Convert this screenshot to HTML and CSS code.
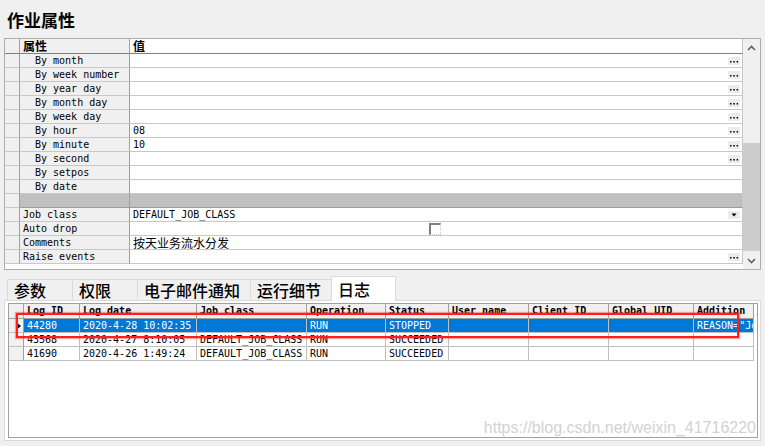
FILE: index.html
```html
<!DOCTYPE html>
<html lang="zh">
<head>
    <meta charset="UTF-8">
    <title>作业属性</title>
    <link rel="stylesheet" href="styles.css">
</head>
<body>
    <h1 class="title">作业属性</h1>

    <!-- grille des propriétés -->
    <div class="props">
        <div class="prop-grid">
            <div class="prop-row prop-head"><div class="ind"></div><div class="name">属性</div><div class="val">值</div></div>
            <div class="prop-row"><div class="ind"></div><div class="name sub">By month</div><div class="val"><span></span><svg class="btn" width="12" height="8"><rect width="12" height="8" fill="#ececec"/><rect x="2" y="4" width="1.5" height="1.5"/><rect x="5.3" y="4" width="1.5" height="1.5"/><rect x="8.6" y="4" width="1.5" height="1.5"/></svg></div></div>
            <div class="prop-row"><div class="ind"></div><div class="name sub">By week number</div><div class="val"><span></span><svg class="btn" width="12" height="8"><rect width="12" height="8" fill="#ececec"/><rect x="2" y="4" width="1.5" height="1.5"/><rect x="5.3" y="4" width="1.5" height="1.5"/><rect x="8.6" y="4" width="1.5" height="1.5"/></svg></div></div>
            <div class="prop-row"><div class="ind"></div><div class="name sub">By year day</div><div class="val"><span></span><svg class="btn" width="12" height="8"><rect width="12" height="8" fill="#ececec"/><rect x="2" y="4" width="1.5" height="1.5"/><rect x="5.3" y="4" width="1.5" height="1.5"/><rect x="8.6" y="4" width="1.5" height="1.5"/></svg></div></div>
            <div class="prop-row"><div class="ind"></div><div class="name sub">By month day</div><div class="val"><span></span><svg class="btn" width="12" height="8"><rect width="12" height="8" fill="#ececec"/><rect x="2" y="4" width="1.5" height="1.5"/><rect x="5.3" y="4" width="1.5" height="1.5"/><rect x="8.6" y="4" width="1.5" height="1.5"/></svg></div></div>
            <div class="prop-row"><div class="ind"></div><div class="name sub">By week day</div><div class="val"><span></span><svg class="btn" width="12" height="8"><rect width="12" height="8" fill="#ececec"/><rect x="2" y="4" width="1.5" height="1.5"/><rect x="5.3" y="4" width="1.5" height="1.5"/><rect x="8.6" y="4" width="1.5" height="1.5"/></svg></div></div>
            <div class="prop-row"><div class="ind"></div><div class="name sub">By hour</div><div class="val"><span>08</span><svg class="btn" width="12" height="8"><rect width="12" height="8" fill="#ececec"/><rect x="2" y="4" width="1.5" height="1.5"/><rect x="5.3" y="4" width="1.5" height="1.5"/><rect x="8.6" y="4" width="1.5" height="1.5"/></svg></div></div>
            <div class="prop-row"><div class="ind"></div><div class="name sub">By minute</div><div class="val"><span>10</span><svg class="btn" width="12" height="8"><rect width="12" height="8" fill="#ececec"/><rect x="2" y="4" width="1.5" height="1.5"/><rect x="5.3" y="4" width="1.5" height="1.5"/><rect x="8.6" y="4" width="1.5" height="1.5"/></svg></div></div>
            <div class="prop-row"><div class="ind"></div><div class="name sub">By second</div><div class="val"><span></span><svg class="btn" width="12" height="8"><rect width="12" height="8" fill="#ececec"/><rect x="2" y="4" width="1.5" height="1.5"/><rect x="5.3" y="4" width="1.5" height="1.5"/><rect x="8.6" y="4" width="1.5" height="1.5"/></svg></div></div>
            <div class="prop-row"><div class="ind"></div><div class="name sub">By setpos</div><div class="val"></div></div>
            <div class="prop-row"><div class="ind"></div><div class="name sub">By date</div><div class="val"></div></div>
            <div class="prop-row sep"><div class="ind"></div><div class="name"></div><div class="val"></div></div>
            <div class="prop-row"><div class="ind"></div><div class="name">Job class</div><div class="val"><span>DEFAULT_JOB_CLASS</span><svg class="btn" width="12" height="8"><rect width="12" height="8" fill="#ececec"/><path d="M3.5 2.5h5l-2.5 3z"/></svg></div></div>
            <div class="prop-row"><div class="ind"></div><div class="name">Auto drop</div><div class="val"><span class="check"></span></div></div>
            <div class="prop-row"><div class="ind"></div><div class="name">Comments</div><div class="val"><span class="cjk">按天业务流水分发</span></div></div>
            <div class="prop-row"><div class="ind"></div><div class="name">Raise events</div><div class="val"><span></span><svg class="btn" width="12" height="8"><rect width="12" height="8" fill="#ececec"/><rect x="2" y="4" width="1.5" height="1.5"/><rect x="5.3" y="4" width="1.5" height="1.5"/><rect x="8.6" y="4" width="1.5" height="1.5"/></svg></div></div>
        </div>
        <div class="vscroll">
            <div class="sb-btn"><svg width="9" height="6"><polyline points="1,5 4.5,1.5 8,5" fill="none" stroke="#606060" stroke-width="1.6"/></svg></div>
            <div class="sb-track"><div class="sb-thumb"></div></div>
            <div class="sb-btn"><svg width="9" height="6"><polyline points="1,1 4.5,4.5 8,1" fill="none" stroke="#606060" stroke-width="1.6"/></svg></div>
        </div>
    </div>

    <!-- onglets -->
    <div class="tabbar">
        <div class="tab">参数</div>
        <div class="tab">权限</div>
        <div class="tab">电子邮件通知</div>
        <div class="tab">运行细节</div>
        <div class="tab active">日志</div>
    </div>

    <div class="panel">
        <div class="loggrid">
            <div class="log-row log-head">
                <div class="ind"></div><div>Log ID</div><div>Log date</div><div>Job class</div><div>Operation</div><div>Status</div><div>User name</div><div>Client ID</div><div>Global UID</div><div>Addition</div>
            </div>
            <div class="log-row selected">
                <div class="ind"><svg class="arrow" width="5" height="8"><path d="M0 0v8l5-4z"/></svg></div><div>44280</div><div>2020-4-28 10:02:35</div><div></div><div>RUN</div><div>STOPPED</div><div></div><div></div><div></div><div>REASON="Job slave process</div>
            </div>
            <div class="log-row">
                <div class="ind"></div><div>43568</div><div>2020-4-27 8:10:05</div><div>DEFAULT_JOB_CLASS</div><div>RUN</div><div>SUCCEEDED</div><div></div><div></div><div></div><div></div>
            </div>
            <div class="log-row">
                <div class="ind"></div><div>41690</div><div>2020-4-26 1:49:24</div><div>DEFAULT_JOB_CLASS</div><div>RUN</div><div>SUCCEEDED</div><div></div><div></div><div></div><div></div>
            </div>

            <div class="mark"></div>
            <div class="watermark">https://blog.csdn.net/weixin_41716220</div>
        </div>
    </div>
</body>
</html>
```

FILE: styles.css
```css
* {
    box-sizing: border-box;
}

body {
    margin: 0;
    width: 765px;
    height: 446px;
    overflow: hidden;
    background: #f0f0f0;
    color: #000;
    font-family: "DejaVu Sans Mono", monospace;
    font-size: 10px;
}

.title {
    margin: 0;
    padding: 9px 0 0 7px;
    font: bold 17px/22px "Noto Sans CJK SC", sans-serif;
}

.cjk {
    display: block;
    font-family: "Noto Sans CJK SC", sans-serif;
    font-size: 12px;
    line-height: 13px;
}

/* grille des propriétés */
.props {
    display: flex;
    height: 232px;
    margin: 7px 4px 0 4px;
    border: 1px solid #adadad;
    background: #fff;
}

.prop-grid {
    flex: 1;
}

.prop-row {
    display: grid;
    grid-template-columns: 15px 110px 1fr;
    height: 14px;
}

.prop-row > div {
    border-right: 1px solid #c8c8c8;
    border-bottom: 1px solid #c8c8c8;
    line-height: 13px;
    white-space: nowrap;
    overflow: hidden;
}

.prop-row .ind {
    background: #f0f0f0;
    border-right-color: #a0a0a0;
}

.prop-row .name {
    background: #f0f0f0;
    padding-left: 3px;
    border-right-color: #a0a0a0;
}

.prop-row .name.sub {
    padding-left: 15px;
}

.prop-row .val {
    display: flex;
    align-items: center;
    justify-content: space-between;
    padding: 0 2px 0 3px;
    overflow: visible;
}

.prop-row .btn {
    flex: none;
}

.prop-head {
    height: 15px;
}

.prop-head > div {
    border-bottom-color: #808080;
    font: bold 12px/14px "Noto Sans CJK SC", sans-serif;
    overflow: visible;
}

.prop-head .val {
    display: block;
}

.prop-row.sep .name,
.prop-row.sep .val {
    background: #c0c0c0;
    border-bottom-color: #9a9a9a;
}

.check {
    width: 12px;
    height: 12px;
    margin-left: 296px;
    border: 1px dotted #c8c8c8;
    border-top: 2px solid #808080;
    border-left: 2px solid #808080;
}

.vscroll {
    width: 17px;
    display: flex;
    flex-direction: column;
    background: #f0f0f0;
}

.sb-btn {
    height: 17px;
    display: flex;
    align-items: center;
    justify-content: center;
}

.sb-track {
    flex: 1;
}

.sb-thumb {
    margin-top: 87px;
    height: 108px;
    background: #cdcdcd;
}

/* onglets */
.tabbar {
    position: relative;
    z-index: 1;
    display: flex;
    align-items: flex-end;
    height: 24px;
    margin: 6px 0 0 7px;
}

.tab {
    height: 21px;
    min-width: 65px;
    padding: 0 10px 0 6px;
    background: #f0f0f0;
    border-top: 1px solid #dadada;
    border-left: 1px solid #dadada;
    font: 500 16px/20px "Noto Sans CJK SC", sans-serif;
}

.tab.active {
    height: 25px;
    margin-bottom: -1px;
    padding-top: 2px;
    background: #fff;
    border-right: 1px solid #dadada;
}

.panel {
    height: 141px;
    margin: 0 4px;
    padding: 2px 2px 2px 3px;
    border: 1px solid #dadada;
    background: #fff;
}

.loggrid {
    position: relative;
    height: 135px;
    border: 1px solid #a0a0a0;
    overflow: hidden;
}

.log-row {
    display: grid;
    grid-template-columns: 15px 56px 117px 110px 79px 63px 80px 80px 85px 60px;
    height: 14px;
}

.log-row > div {
    padding-left: 3px;
    border-right: 1px solid #c0c0c0;
    border-bottom: 1px solid #c0c0c0;
    line-height: 13px;
    white-space: nowrap;
    overflow: hidden;
}

.log-row .ind {
    background: #f0f0f0;
    border-right-color: #a0a0a0;
    padding: 3px 0 0 7px;
}

.log-row .arrow {
    display: block;
}

.log-head {
    height: 15px;
}

.log-head > div {
    background: #f0f0f0;
    font-weight: bold;
    border-right-color: #a0a0a0;
    border-bottom-color: #a0a0a0;
}

.log-row.selected > div:not(.ind) {
    background: #0078d7;
    color: #fff;
}

/* annotation rouge par-dessus la ligne */
.mark {
    position: absolute;
    left: 7px;
    top: 9px;
    width: 723px;
    height: 25px;
    border: 2px solid #ff1f1f;
    box-shadow: 0 0 1px 1px rgba(255, 0, 0, 0.35);
}

.watermark {
    position: absolute;
    right: 1px;
    bottom: 0;
    font: 16px/18px "Liberation Sans", Arial, sans-serif;
    color: #d2d2d2;
}
```
